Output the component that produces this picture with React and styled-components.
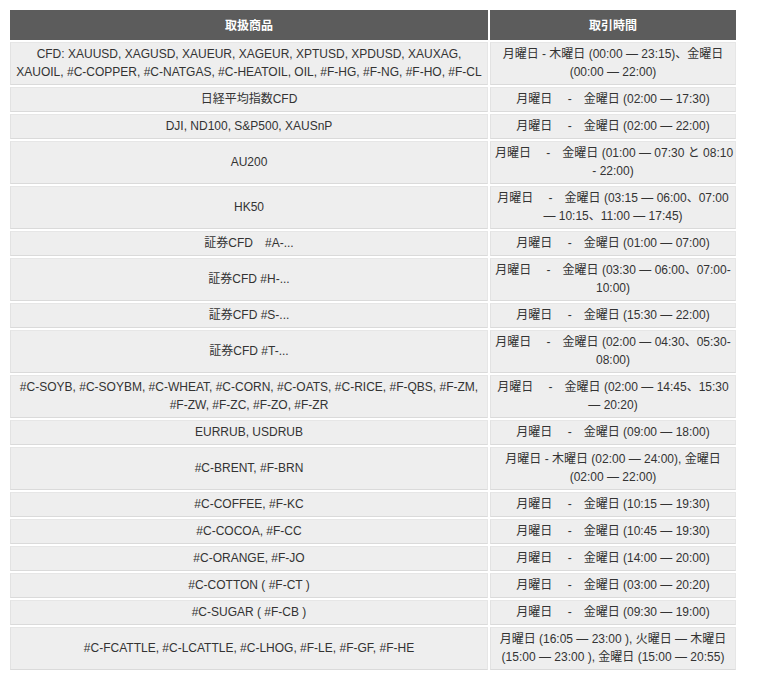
import React from 'react';
import styled, { createGlobalStyle } from "styled-components"

const GlobalStyle = createGlobalStyle`
	body {
		margin: 8px;
		background: #fff;
		font-family: "Liberation Sans", Arial, "Noto Sans CJK JP", sans-serif;
		color: #333;
	}
`

const SEP = "\u3000 -\u3000"

const rows = [
	{ items: ["CFD: XAUUSD, XAGUSD, XAUEUR, XAGEUR, XPTUSD, XPDUSD, XAUXAG,", "XAUOIL, #C-COPPER, #C-NATGAS, #C-HEATOIL, OIL, #F-HG, #F-NG, #F-HO, #F-CL"], time: ["月曜日 - 木曜日 (00:00 — 23:15)、金曜日", "(00:00 — 22:00)"] },
	{ items: ["日経平均指数CFD"], time: [`月曜日${SEP}金曜日 (02:00 — 17:30)`] },
	{ items: ["DJI, ND100, S&P500, XAUSnP"], time: [`月曜日${SEP}金曜日 (02:00 — 22:00)`] },
	{ items: ["AU200"], time: [`月曜日${SEP}金曜日 (01:00 — 07:30 と 08:10`, "- 22:00)"] },
	{ items: ["HK50"], time: [`月曜日${SEP}金曜日 (03:15 — 06:00、07:00`, "— 10:15、11:00 — 17:45)"] },
	{ items: ["証券CFD\u3000#A-..."], time: [`月曜日${SEP}金曜日 (01:00 — 07:00)`] },
	{ items: ["証券CFD #H-..."], time: [`月曜日${SEP}金曜日 (03:30 — 06:00、07:00-`, "10:00)"] },
	{ items: ["証券CFD #S-..."], time: [`月曜日${SEP}金曜日 (15:30 — 22:00)`] },
	{ items: ["証券CFD #T-..."], time: [`月曜日${SEP}金曜日 (02:00 — 04:30、05:30-`, "08:00)"] },
	{ items: ["#C-SOYB, #C-SOYBM, #C-WHEAT, #C-CORN, #C-OATS, #C-RICE, #F-QBS, #F-ZM,", "#F-ZW, #F-ZC, #F-ZO, #F-ZR"], time: [`月曜日${SEP}金曜日 (02:00 — 14:45、15:30`, "— 20:20)"] },
	{ items: ["EURRUB, USDRUB"], time: [`月曜日${SEP}金曜日 (09:00 — 18:00)`] },
	{ items: ["#C-BRENT, #F-BRN"], time: ["月曜日 - 木曜日 (02:00 — 24:00), 金曜日", "(02:00 — 22:00)"] },
	{ items: ["#C-COFFEE, #F-KC"], time: [`月曜日${SEP}金曜日 (10:15 — 19:30)`] },
	{ items: ["#C-COCOA, #F-CC"], time: [`月曜日${SEP}金曜日 (10:45 — 19:30)`] },
	{ items: ["#C-ORANGE, #F-JO"], time: [`月曜日${SEP}金曜日 (14:00 — 20:00)`] },
	{ items: ["#C-COTTON ( #F-CT )"], time: [`月曜日${SEP}金曜日 (03:00 — 20:20)`] },
	{ items: ["#C-SUGAR ( #F-CB )"], time: [`月曜日${SEP}金曜日 (09:30 — 19:00)`] },
	{ items: ["#C-FCATTLE, #C-LCATTLE, #C-LHOG, #F-LE, #F-GF, #F-HE"], time: ["月曜日 (16:05 — 23:00 ), 火曜日 — 木曜日", "(15:00 — 23:00 ), 金曜日 (15:00 — 20:55)"] },
]

function Lines ({ lines }) {
	return lines.map((line, i) => (
		<React.Fragment key={i}>
			{i > 0 && <br />}
			{line}
		</React.Fragment>
	))
}

export default function App () {
	return (
		<>
			<GlobalStyle />
			<Table>
				<colgroup>
					<col style={{ width: 478 }} />
					<col style={{ width: 246 }} />
				</colgroup>
				<thead>
					<tr>
						<HeadCell>取扱商品</HeadCell>
						<HeadCell>取引時間</HeadCell>
					</tr>
				</thead>
				<tbody>
					{rows.map((row, i) => (
						<tr key={i}>
							<Cell><Lines lines={row.items} /></Cell>
							<Cell><Lines lines={row.time} /></Cell>
						</tr>
					))}
				</tbody>
			</Table>
		</>
	);
}

const Table = styled.table`
	width: 730px;
	table-layout: fixed;
	border-collapse: separate;
	border-spacing: 2px;
	font-size: 12px;
	line-height: 18px;
`

const HeadCell = styled.th`
	background: #5c5c5c;
	color: #fff;
	font-family: "Noto Sans CJK JP", sans-serif;
	font-weight: bold;
	font-size: 12px;
	text-align: center;
	padding: 6px 4px;
	line-height: 18px;
`

const Cell = styled.td`
	background: #eeeeee;
	border: 1px solid #e6e6e6;
	border-bottom-color: #dadada;
	border-left-color: #e2e2e2;
	text-align: center;
	vertical-align: middle;
	padding: 2px 4px 3px;
	color: #333;
	white-space: nowrap;
`
